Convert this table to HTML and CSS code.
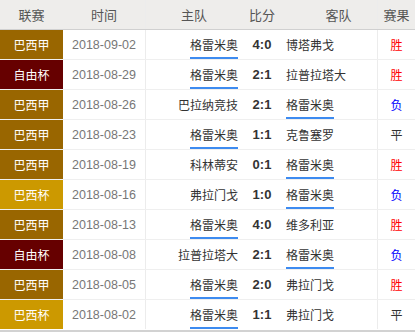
FILE: index.html
```html
<!DOCTYPE html>
<html lang="zh">
<head>
<meta charset="utf-8">
<link rel="stylesheet" href="styles.css">
</head>
<body>
<div class="table">
  <div class="row head">
    <div class="c league">联赛</div>
    <div class="c time">时间</div>
    <div class="c home">主队</div>
    <div class="c score">比分</div>
    <div class="c away">客队</div>
    <div class="c res">赛果</div>
  </div>
  <div class="row">
    <div class="c league jia">巴西甲</div>
    <div class="c time">2018-09-02</div>
    <div class="c home"><span class="hl">格雷米奥</span></div>
    <div class="c score">4:0</div>
    <div class="c away"><span>博塔弗戈</span></div>
    <div class="c res win">胜</div>
  </div>
  <div class="row">
    <div class="c league ziyou">自由杯</div>
    <div class="c time">2018-08-29</div>
    <div class="c home"><span class="hl">格雷米奥</span></div>
    <div class="c score">2:1</div>
    <div class="c away"><span>拉普拉塔大</span></div>
    <div class="c res win">胜</div>
  </div>
  <div class="row">
    <div class="c league jia">巴西甲</div>
    <div class="c time">2018-08-26</div>
    <div class="c home"><span>巴拉纳竞技</span></div>
    <div class="c score">2:1</div>
    <div class="c away"><span class="hl">格雷米奥</span></div>
    <div class="c res lose">负</div>
  </div>
  <div class="row">
    <div class="c league jia">巴西甲</div>
    <div class="c time">2018-08-23</div>
    <div class="c home"><span class="hl">格雷米奥</span></div>
    <div class="c score">1:1</div>
    <div class="c away"><span>克鲁塞罗</span></div>
    <div class="c res draw">平</div>
  </div>
  <div class="row">
    <div class="c league jia">巴西甲</div>
    <div class="c time">2018-08-19</div>
    <div class="c home"><span>科林蒂安</span></div>
    <div class="c score">0:1</div>
    <div class="c away"><span class="hl">格雷米奥</span></div>
    <div class="c res win">胜</div>
  </div>
  <div class="row">
    <div class="c league bei">巴西杯</div>
    <div class="c time">2018-08-16</div>
    <div class="c home"><span>弗拉门戈</span></div>
    <div class="c score">1:0</div>
    <div class="c away"><span class="hl">格雷米奥</span></div>
    <div class="c res lose">负</div>
  </div>
  <div class="row">
    <div class="c league jia">巴西甲</div>
    <div class="c time">2018-08-13</div>
    <div class="c home"><span class="hl">格雷米奥</span></div>
    <div class="c score">4:0</div>
    <div class="c away"><span>维多利亚</span></div>
    <div class="c res win">胜</div>
  </div>
  <div class="row">
    <div class="c league ziyou">自由杯</div>
    <div class="c time">2018-08-08</div>
    <div class="c home"><span>拉普拉塔大</span></div>
    <div class="c score">2:1</div>
    <div class="c away"><span class="hl">格雷米奥</span></div>
    <div class="c res lose">负</div>
  </div>
  <div class="row">
    <div class="c league jia">巴西甲</div>
    <div class="c time">2018-08-05</div>
    <div class="c home"><span class="hl">格雷米奥</span></div>
    <div class="c score">2:0</div>
    <div class="c away"><span>弗拉门戈</span></div>
    <div class="c res win">胜</div>
  </div>
  <div class="row">
    <div class="c league bei">巴西杯</div>
    <div class="c time">2018-08-02</div>
    <div class="c home"><span class="hl">格雷米奥</span></div>
    <div class="c score">1:1</div>
    <div class="c away"><span>弗拉门戈</span></div>
    <div class="c res draw">平</div>
  </div>
</div>
</body>
</html>
```

FILE: styles.css
```css
html, body {
  margin: 0;
  padding: 0;
  background: #fff;
}
body {
  font-family: "Noto Sans CJK SC", "Liberation Sans", sans-serif;
  font-size: 12px;
  color: #333;
}
.table {
  width: 415px;
  border-bottom: 2px solid #d2d2d2;
}
.row {
  display: grid;
  grid-template-columns: 63px 83px 100px 32px 99px 38px;
  height: 30px;
  border-bottom: 1px solid #efefef;
  box-sizing: border-box;
}
.row:last-child {
  border-bottom: 1px solid #fff;
}
.row.head {
  background: #eeedeb;
  border-bottom: 1px solid #d0d0d0;
  color: #555;
  font-size: 13px;
}
.c {
  display: flex;
  align-items: center;
  justify-content: center;
  height: 29px;
  white-space: nowrap;
}
.time {
  border-right: 1px solid #ececec;
  color: #777;
  font-family: "Liberation Sans", sans-serif;
  font-size: 12.5px;
}
.head .time {
  color: #555;
  font-family: "Noto Sans CJK SC", sans-serif;
  font-size: 13px;
}
.home {
  justify-content: flex-end;
  padding-right: 8px;
}
.away {
  justify-content: flex-start;
  padding-left: 8px;
}
.head .home {
  justify-content: center;
  padding-right: 4px;
}
.head .away {
  justify-content: center;
  padding-left: 22px;
}
.res {
  border-left: 1px solid #ececec;
}
.home span, .away span {
  display: flex;
  align-items: center;
  height: 29px;
  box-sizing: border-box;
}
.home span.hl, .away span.hl {
  border-bottom: 2px solid #3d8bf0;
  padding-top: 2px;
}
.score {
  font-family: "Liberation Sans", sans-serif;
  font-weight: bold;
  font-size: 13px;
  color: #333;
}
.head .score {
  font-family: "Noto Sans CJK SC", sans-serif;
  font-weight: normal;
  color: #555;
}
.league {
  color: #fff;
  font-size: 12px;
}
.head .league {
  color: #555;
  font-size: 13px;
}
.jia { background: #996600; }
.ziyou { background: #660000; }
.bei { background: #cc9900; }
.win { color: #f00; }
.lose { color: #00f; }
.draw { color: #333; }
```
